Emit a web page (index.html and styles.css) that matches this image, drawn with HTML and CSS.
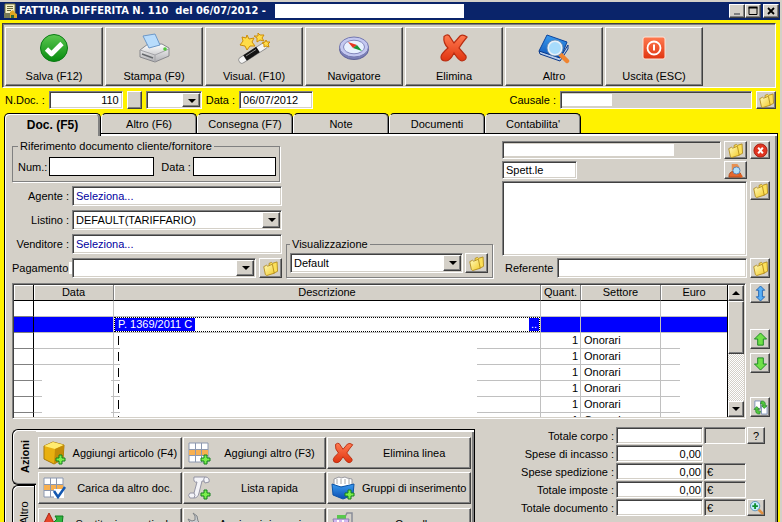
FILE: index.html
```html
<!DOCTYPE html>
<html lang="it">
<head>
<meta charset="utf-8">
<title>Fattura differita</title>
<link rel="stylesheet" href="styles.css">
</head>
<body>
<svg class="defs" aria-hidden="true">
  <defs>
    <linearGradient id="gGreen" x1="0" y1="0" x2="0" y2="1"><stop offset="0" stop-color="#5cc850"/><stop offset="1" stop-color="#078a10"/></linearGradient>
    <linearGradient id="gRed" x1="0" y1="0" x2="0" y2="1"><stop offset="0" stop-color="#ff7a50"/><stop offset="1" stop-color="#e03410"/></linearGradient>
    <linearGradient id="gGold" x1="0" y1="0" x2="1" y2="1"><stop offset="0" stop-color="#fffbc0"/><stop offset="1" stop-color="#f4cc28"/></linearGradient>
    <linearGradient id="gBlue" x1="0" y1="0" x2="0" y2="1"><stop offset="0" stop-color="#3a9cf0"/><stop offset="1" stop-color="#0a4cb0"/></linearGradient>
    <linearGradient id="gGrey" x1="0" y1="0" x2="0" y2="1"><stop offset="0" stop-color="#ffffff"/><stop offset="1" stop-color="#b0b0b4"/></linearGradient>
  </defs>
  <symbol id="folder" viewBox="0 0 16 16">
    <path d="M6.500 4V2.500L9 1.500l1 1 5-1.500.5 10-4 2z" fill="#fce058" stroke="#b08818" stroke-width=".9"/>
    <path d="M.8 6l3-1.500 1.200 1 5-2L12 13l-8 2.500-1.500-1z" fill="url(#gGold)" stroke="#b08818" stroke-width=".9"/>
  </symbol>
  <symbol id="cross" viewBox="0 0 32 32">
    <path d="M6 4.500q3-2.500 5-1L16 11l6-7q3-2 7 1-5 6-8 11l7 8q1 4-4 5-3 0-8-8-4 8-8 8-5 0-5-4 0-3 7-9Q5 11 6 4.500z" fill="url(#gRed)" stroke="#b82c10" stroke-width="1.200"/>
  </symbol>
  <symbol id="plus" viewBox="0 0 11 11">
    <path d="M4 1h3v3h3v3H7v3H4V7H1V4h3z" fill="#7cf04c" stroke="#14801c"/>
  </symbol>
  <symbol id="grid" viewBox="0 0 22 22">
    <path d="M1 1h19v19H1z" fill="#fff" stroke="#8c98b0"/>
    <path d="M1 7h19v7H1z" fill="#f8b050"/>
    <path d="M1 7.500h19M1 13.500h19M7.500 1v19M13.500 1v19" stroke="#8c98b0" fill="none"/>
  </symbol>
  <symbol id="arrow" viewBox="0 0 16 16">
    <path d="M8 1l6.500 6.500H11V14H5V7.500H1.500z" fill="#70e048" stroke="#188420"/>
  </symbol>
</svg>

<main class="window">
  <header class="titlebar">
    <svg class="appicon" viewBox="0 0 16 16"><path d="M2 1h10v12H2z" fill="#f4f0c8" stroke="#7c7838"/><path d="M4 3.500h6M4 5.500h6M4 7.500h4" stroke="#68683c"/><path d="M1 10h6v5H1z" fill="#787c58"/><path d="M7 9l3-2 2 3 2 1v4H7z" fill="#e0a820"/><path d="M8 12h3v3H8z" fill="#306c30"/></svg>
    <h1>FATTURA DIFFERITA N. 110&nbsp; del 06/07/2012 -</h1>
    <span class="title-blank"></span>
    <div class="winbuttons">
      <button class="raised" aria-label="Riduci"><svg viewBox="0 0 12 10"><path d="M3 8h6" stroke="#808080" stroke-width="2"/></svg></button>
      <button class="raised" aria-label="Ingrandisci"><svg viewBox="0 0 12 10"><path d="M2 1.500h8v7H2z" fill="none" stroke="#000"/><path d="M1.500 1.500h9" stroke="#000" stroke-width="2"/></svg></button>
      <button class="raised close" aria-label="Chiudi"><svg viewBox="0 0 12 10"><path d="M3 2l6 6M9 2L3 8" stroke="#000" stroke-width="1.800"/></svg></button>
    </div>
  </header>

  <nav class="toolbar">
    <button class="raised tool"><svg viewBox="0 0 32 32"><circle cx="16" cy="16" r="13.500" fill="url(#gGreen)" stroke="#0a7a14"/><path d="M8.500 17l5 5L24 11.500" fill="none" stroke="#fff" stroke-width="4.600" stroke-linejoin="round"/></svg>Salva (F12)</button>
    <button class="raised tool"><svg viewBox="0 0 32 32"><path d="M2 18l8-6 14 0 7 4v8l-14 6L2 25z" fill="url(#gGrey)" stroke="#88888c"/><path d="M5 4l12-2 5 11-11 3z" fill="#b8dcfc" stroke="#6c98c8"/><path d="M2 18l15 5 14-6M17 23v7" fill="none" stroke="#a4a4a8"/><path d="M4 22l11 4" stroke="#65686c" stroke-width="1.500"/><circle cx="27" cy="17" r="1.800" fill="#50c83c"/></svg>Stampa (F9)</button>
    <button class="raised tool"><svg viewBox="0 0 32 32"><path d="M4 28L26 14" stroke="#888" stroke-width="7" stroke-linecap="round"/><path d="M4 28L26 14" stroke="#f4f4f4" stroke-width="5.600" stroke-linecap="round"/><path d="M7 26L20 17.500" stroke="#141414" stroke-width="6.500"/><path d="M8 24l10-6.500" stroke="#888" stroke-width="1"/><path d="M9 3l2 4 5-1-2 4 3 4-5 0-3 4-2-4-5-1 3-4-1-4 4 1zM20 1l2 2 4 0-2 3 2 3-4-1-3 2 0-4-3-2 4 0zM28 8l1 2 3 0-2 2 1 3-3-1-2 1 0-3-2-1 3-1z" fill="#ffdc48" stroke="#cc8c08"/></svg>Visual. (F10)</button>
    <button class="raised tool"><svg viewBox="0 0 32 32"><ellipse cx="16" cy="17" rx="14.500" ry="10.500" fill="#7c80b8" stroke="#5c6098"/><ellipse cx="16" cy="15" rx="14.500" ry="10" fill="#c4c8f0" stroke="#7478b0"/><ellipse cx="16" cy="15" rx="10.500" ry="6.800" fill="#e8f0ff" stroke="#8488bc"/><path d="M10 10l9 3-4 3z" fill="#e83820"/><path d="M15 16l4-3 5 6z" fill="#189438"/></svg>Navigatore</button>
    <button class="raised tool"><svg><use href="#cross"/></svg>Elimina</button>
    <button class="raised tool"><svg viewBox="0 0 32 32"><path d="M9 3l20 7-7 18L1 19z" fill="url(#gBlue)" stroke="#0c449c"/><path d="M1 19l21 7 8-13v4l-8 12L2 22z" fill="#b8cce8" stroke="#08388c"/><path d="M22 22l7 7" stroke="#f08430" stroke-width="4.500" stroke-linecap="round"/><circle cx="17" cy="16" r="7" fill="#a8dcfc" stroke="#e8f0f8" stroke-width="2"/><circle cx="17" cy="16" r="8" fill="none" stroke="#6088b0" stroke-width=".8"/></svg>Altro</button>
    <button class="raised tool"><svg viewBox="0 0 32 32"><rect x="5" y="5" width="22" height="22" rx="2" fill="url(#gRed)" stroke="#fce4d8"/><circle cx="16" cy="16" r="6.500" fill="none" stroke="#fff" stroke-width="1.800"/><path d="M16 12.500v6" stroke="#fff" stroke-width="2"/></svg>Uscita (ESC)</button>
  </nav>

  <div class="docbar">
    <label for="ndoc">N.Doc. :</label>
    <input id="ndoc" class="sunken num w74" value="110">
    <button class="raised mini" aria-label="Numerazione"></button>
    <span class="combo w56"><select aria-label="Serie"><option></option></select></span>
    <label for="data">Data :</label>
    <input id="data" class="sunken w74" value="06/07/2012">
    <label for="causale" class="push">Causale :</label>
    <span class="sunken readonly causale"><input id="causale"></span>
    <button class="raised pick" aria-label="Scegli causale"><svg><use href="#folder"/></svg></button>
  </div>

  <nav class="tabs">
    <button class="tab active">Doc. (F5)</button>
    <button class="tab">Altro (F6)</button>
    <button class="tab">Consegna (F7)</button>
    <button class="tab">Note</button>
    <button class="tab">Documenti</button>
    <button class="tab">Contabilita'</button>
  </nav>

  <section class="page">
    <div class="form">
      <div class="form-left">
        <fieldset class="group ref">
          <legend>Riferimento documento cliente/fornitore</legend>
          <label for="rnum">Num.:</label><input id="rnum" class="flat rnum">
          <label for="rdata">Data :</label><input id="rdata" class="flat rdata">
        </fieldset>
        <div class="row"><label for="agente">Agente :</label><input id="agente" class="sunken grow link" value="Seleziona..."></div>
        <div class="row"><label for="listino">Listino :</label><span class="combo grow"><select id="listino"><option>DEFAULT(TARIFFARIO)</option></select></span></div>
        <div class="row"><label for="vend">Venditore :</label><input id="vend" class="sunken grow link" value="Seleziona..."></div>
        <div class="row"><label for="pag">Pagamento&nbsp;</label><span class="combo grow payment"><select id="pag"><option></option></select></span><button class="raised pick wide" aria-label="Scegli pagamento"><svg><use href="#folder"/></svg></button></div>
      </div>

      <fieldset class="group vis">
        <legend>Visualizzazione</legend>
        <span class="combo grow"><select aria-label="Visualizzazione"><option>Default</option></select></span>
        <button class="raised pick wide" aria-label="Scegli visualizzazione"><svg><use href="#folder"/></svg></button>
      </fieldset>

      <div class="form-right">
        <div class="row low"><span class="sunken readonly grow client"><input aria-label="Cliente"></span><button class="raised pick wide" aria-label="Scegli cliente"><svg><use href="#folder"/></svg></button><button class="raised pick" aria-label="Rimuovi cliente"><svg viewBox="0 0 16 16"><circle cx="8" cy="8" r="7" fill="#e03420" stroke="#a81c10"/><path d="M5.500 5l5 6M10.500 5l-5 6" stroke="#fff" stroke-width="2.200"/></svg></button></div>
        <div class="row low"><input class="sunken w75" aria-label="Titolo" value="Spett.le"><button class="raised pick wide find" aria-label="Cerca cliente"><svg viewBox="0 0 16 16"><path d="M4 1h6l2 3v4H4z" fill="#e89050"/><path d="M1 15q0-6 5-6h4q4 0 4 6z" fill="#e46830" stroke="#b04818"/><path d="M11 11l4 4" stroke="#e06020" stroke-width="2.500"/><circle cx="9" cy="8" r="3.800" fill="#b0e0fc" stroke="#5c80b0"/></svg></button></div>
        <div class="row address"><textarea class="sunken grow" aria-label="Indirizzo"></textarea><button class="raised pick" aria-label="Scegli indirizzo"><svg><use href="#folder"/></svg></button></div>
        <div class="row"><label for="refe">Referente</label><input id="refe" class="sunken grow"><button class="raised pick" aria-label="Scegli referente"><svg><use href="#folder"/></svg></button></div>
      </div>
    </div>

    <div class="lines">
      <div class="sunken gridbox">
        <div class="gridview">
          <table>
            <colgroup><col class="c-mark"><col class="c-date"><col><col class="c-qty"><col class="c-sector"><col class="c-euro"></colgroup>
            <thead><tr><th></th><th>Data</th><th>Descrizione</th><th>Quant.</th><th>Settore</th><th>Euro</th></tr></thead>
            <tbody>
              <tr><td></td><td></td><td></td><td></td><td></td><td></td></tr>
              <tr class="selected"><td></td><td></td><td class="focus"><div><span>P. 1369/2011 C</span><span class="tail">..</span></div></td><td></td><td></td><td></td></tr>
              <tr><td></td><td></td><td><i></i></td><td>1</td><td>Onorari</td><td></td></tr>
              <tr><td></td><td></td><td><i></i></td><td>1</td><td>Onorari</td><td></td></tr>
              <tr><td></td><td></td><td><i></i></td><td>1</td><td>Onorari</td><td></td></tr>
              <tr><td></td><td></td><td><i></i></td><td>1</td><td>Onorari</td><td></td></tr>
              <tr><td></td><td></td><td><i></i></td><td>1</td><td>Onorari</td><td></td></tr>
              <tr><td></td><td></td><td><i></i></td><td>1</td><td>Onorari</td><td></td></tr>
            </tbody>
          </table>
          <span class="blank blank-date"></span><span class="blank blank-desc"></span><span class="blank blank-euro"></span>
        </div>
        <div class="scroll">
          <button class="raised" aria-label="Su"><span class="tri up"></span></button>
          <div class="track"><div class="raised thumb"></div></div>
          <button class="raised" aria-label="Giù"><span class="tri"></span></button>
        </div>
      </div>
      <div class="side">
        <button class="raised pick" aria-label="Altezza"><svg viewBox="0 0 16 16"><path d="M8 0l4.500 4.500H10v7h2.500L8 16l-4.500-4.500H6v-7H3.500z" fill="#58b0f8" stroke="#2464b0"/></svg></button>
        <button class="raised pick second" aria-label="Sposta su"><svg><use href="#arrow"/></svg></button>
        <button class="raised pick" aria-label="Sposta giù"><svg class="flip"><use href="#arrow"/></svg></button>
        <button class="raised pick last" aria-label="Aggiorna"><svg viewBox="0 0 16 16"><path d="M2 1h6v8H2zM9 7h6v8H9z" fill="#fff" stroke="#7c90b8"/><path d="M9 1q5 0 4 5h2l-3 3-3-3h2q0-2-3-2zM7 15q-5 0-4-5H1l3-3 3 3H5q0 2 3 2z" fill="#50c83c" stroke="#187c20" stroke-width=".7"/></svg></button>
      </div>
    </div>

    <div class="bottom">
      <div class="actions">
        <div class="vtabs"><button class="vtab on">Azioni</button><button class="vtab">Altro</button></div>
        <div class="actionpage">
          <button class="raised act"><svg viewBox="0 0 24 24"><path d="M2 5l9-4 11 3-1 14-9 5-10-5z" fill="#e8b010" stroke="#a87808"/><path d="M2 5l9-4 11 3-9 4z" fill="#ffec70"/><path d="M13 8l9-4-1 14-9 5z" fill="#c48c08"/><use href="#plus" x="13" y="13" width="11" height="11"/></svg><span>Aggiungi articolo (F4)</span></button>
          <button class="raised act"><svg viewBox="0 0 24 24"><use href="#grid" x="1" y="1" width="22" height="22"/><use href="#plus" x="13" y="13" width="11" height="11"/></svg><span>Aggiungi altro (F3)</span></button>
          <button class="raised act"><svg><use href="#cross"/></svg><span>Elimina linea</span></button>
          <button class="raised act"><svg viewBox="0 0 24 24"><use href="#grid" x="1" y="1" width="22" height="22"/><path d="M12 13h10v9H12z" fill="#fff"/><path d="M12 15l4 6 7-10" fill="none" stroke="#1458b0" stroke-width="2.500"/></svg><span>Carica da altro doc.</span></button>
          <button class="raised act"><svg viewBox="0 0 24 24"><path d="M7 1h12q4 1 3 5l-4 1-1-2h-2l-3 12q-1 5-5 5H3q-3-3 0-5h4l3-11q-4 1-3-5z" fill="#f4f4f8" stroke="#9494a4"/><path d="M7 17q2 2 0 5M18 1q-2 2-1 4" fill="none" stroke="#9494a4"/><use href="#plus" x="13" y="13" width="11" height="11"/></svg><span>Lista rapida</span></button>
          <button class="raised act"><svg viewBox="0 0 24 24"><path d="M3 3l5-2 2 1 4-1 2 1 5 1v8H3z" fill="#fff" stroke="#9a9aa0"/><path d="M6 3v5M10 3v5M14 3v5M18 3v5" stroke="#a8a8a8"/><path d="M1 8l9 3 13-3-1 11-10 4-10-4z" fill="url(#gBlue)" stroke="#0c54a8"/><use href="#plus" x="13" y="13" width="11" height="11"/></svg><span>Gruppi di inserimento</span></button>
          <button class="raised act"><svg viewBox="0 0 24 24"><path d="M7 1l6 12H1z" fill="#e84428" stroke="#a82410"/><path d="M13 4l8 0-1 9-3-3-4 4-2-3 4-4z" fill="#30b440" stroke="#0c7c1c"/><path d="M2 14h8v8H2z" fill="#f0a020"/><circle cx="17" cy="18" r="5" fill="#3484d8"/></svg><span>Sostituzione articolo</span></button>
          <button class="raised act"><svg viewBox="0 0 24 24"><path d="M6 1l4 3 1 5 10 10q1 3-2 4L9 12l-5 0-3-5 4 2 3-1 0-4z" fill="#c8ccd0" stroke="#808488"/></svg><span>Aggiungi riparazione</span></button>
          <button class="raised act"><svg viewBox="0 0 24 24"><path d="M14 5l2-4h5v12l-3 3" fill="none" stroke="#888c98" stroke-width="1.500"/><path d="M6 3h9v6H6z" fill="#58c84c"/><path d="M2 7h16l-2 10H4z" fill="#d0b8f0" stroke="#8c80b0"/><path d="M7 8v8M12 8v8" stroke="#fff" stroke-width="2"/><circle cx="6" cy="20" r="2" fill="#555"/><circle cx="15" cy="20" r="2" fill="#555"/></svg><span>Carrello</span></button>
        </div>
      </div>

      <div class="totals">
        <label for="t1">Totale corpo :</label><input id="t1" class="sunken num"><output class="sunken"></output><button class="raised" aria-label="Aiuto">?</button>
        <label for="t2">Spese di incasso :</label><input id="t2" class="sunken num" value="0,00"><span></span><span></span>
        <label for="t3">Spese spedizione :</label><input id="t3" class="sunken num" value="0,00"><output class="sunken">€</output><span></span>
        <label for="t4">Totale imposte :</label><input id="t4" class="sunken num" value="0,00"><output class="sunken">€</output><span></span>
        <label for="t5">Totale documento :</label><input id="t5" class="sunken num"><output class="sunken">€</output><button class="raised" aria-label="Dettaglio"><svg viewBox="0 0 16 16"><path d="M10 10l4 4" stroke="#e09040" stroke-width="3" stroke-linecap="round"/><circle cx="6.500" cy="6.500" r="5" fill="#c4ecfc" stroke="#5c90b8"/><path d="M6.500 3.500v6M3.500 6.500h6" stroke="#109030" stroke-width="2"/></svg></button>
      </div>
    </div>
  </section>
</main>
</body>
</html>
```
FILE: styles.css
```css
:root {
  --face: #d4d0c8;
  --shade: #808080;
  --dark: #404040;
  --yellow: #fff200;
}

* { box-sizing: border-box; }

body {
  margin: 0;
  height: 100vh;
  overflow: hidden;
  background: var(--face);
  color: #000;
  font: 11px/14px "Liberation Sans", Arial, sans-serif;
}

button, input, select, textarea {
  margin: 0;
  padding: 0;
  border: 0;
  border-radius: 0;
  font: inherit;
  color: inherit;
  min-width: 0;
  outline: 0;
}

button { background: var(--face); }
label { white-space: nowrap; }
.defs { position: absolute; width: 0; height: 0; }

.raised {
  background: var(--face);
  border: 1px solid;
  border-color: #fff var(--dark) var(--dark) #fff;
  box-shadow: inset -1px -1px var(--shade);
}

.sunken {
  background: #fff;
  border: 1px solid;
  border-color: var(--shade) #fff #fff var(--shade);
  box-shadow: inset 1px 1px var(--dark), inset -1px -1px var(--face);
  padding: 0 3px;
}

.num { text-align: right; }
.grow { flex: 1; }
.w74 { width: 74px; }
.w75 { width: 75px; }
.w56 { width: 56px; }

.window {
  height: 100vh;
  display: flex;
  flex-direction: column;
  background: var(--yellow);
  border-top: 2px solid var(--face);
  border-right: 2px solid var(--face);
}

/* Title bar */
.titlebar {
  flex: none;
  display: flex;
  align-items: center;
  height: 18px;
  padding: 0 1px 0 3px;
  background: #0a246a;
  color: #fff;
}
.appicon { width: 16px; height: 16px; }
.titlebar h1 {
  margin: 0;
  min-width: 253px;
  font: bold 11px/18px "DejaVu Sans Condensed", Tahoma, sans-serif;
  white-space: nowrap;
}
.title-blank { width: 189px; height: 14px; margin-left: 3px; background: #fff; }
.winbuttons { display: flex; margin-left: auto; }
.winbuttons button { width: 16px; height: 14px; display: grid; place-items: center; }
.winbuttons svg { width: 12px; height: 10px; }
.winbuttons .close { margin-left: 2px; }

/* Toolbar */
.toolbar {
  flex: none;
  display: flex;
  gap: 2px;
  margin: 3px 4px 0 2px;
  padding: 3px 2px 0;
  height: 65px;
  background: var(--face);
  border: 1px solid;
  border-color: var(--dark) #fff #fff var(--dark);
  box-shadow: inset 1px 1px var(--shade);
}
.tool {
  width: 98px;
  height: 59px;
  display: flex;
  flex-direction: column;
  align-items: center;
  padding-top: 4px;
}
.tool svg { width: 32px; height: 32px; margin-bottom: 5px; }

/* Document row */
.docbar {
  flex: none;
  display: flex;
  align-items: center;
  height: 18px;
  margin: 3px 4px 0 5px;
  gap: 4px;
}
.docbar .sunken, .docbar .combo, .docbar button { height: 18px; }
.docbar .mini { width: 15px; }
.docbar .push { margin-left: auto; }
.causale { width: 192px; }
.readonly { background: var(--face); padding: 2px 1px; display: flex; }
.readonly input { background: #fff; height: 100%; }
.causale input { width: 50px; }

.combo { position: relative; display: block; height: 20px; }
.combo select {
  appearance: none;
  width: 100%;
  height: 100%;
  background: #fff;
  border: 1px solid;
  border-color: var(--shade) #fff #fff var(--shade);
  box-shadow: inset 1px 1px var(--dark), inset -1px -1px var(--face);
  padding: 0 20px 0 3px;
}
.combo::before {
  content: "";
  position: absolute;
  top: 2px;
  right: 2px;
  bottom: 2px;
  width: 16px;
  background: var(--face);
  border: 1px solid;
  border-color: #fff var(--dark) var(--dark) #fff;
  box-shadow: inset -1px -1px var(--shade);
  pointer-events: none;
}
.combo::after, .tri {
  border: 4px solid transparent;
  border-top-color: #000;
  border-bottom: 0;
}
.combo::after {
  content: "";
  position: absolute;
  top: 8px;
  right: 6px;
  pointer-events: none;
}
.payment { background: linear-gradient(#fff, #fff) 0 4px / 6px 12px no-repeat; margin-left: -3px; padding-left: 3px; }
.tri.up { transform: rotate(180deg); }

.pick {
  width: 20px;
  flex: none;
  display: grid;
  place-items: center;
}
.pick.wide { width: 23px; }
.pick svg { width: 15px; height: 15px; }

/* Tabs */
.tabs { flex: none; display: flex; margin: 4px 0 0 4px; height: 20px; }
.tab {
  width: 96px;
  height: 20px;
  border: 1px solid #000;
  border-bottom: 0;
  border-left-color: #fff;
  border-radius: 5px 5px 0 0;
  box-shadow: inset -1px 0 var(--shade);
}
.tab.active {
  position: relative;
  z-index: 1;
  width: 97px;
  height: 23px;
  border-left-color: #000;
  box-shadow: inset 1px 1px #fff, inset -2px 0 var(--shade);
  font: bold 12px/20px "Liberation Sans", Arial, sans-serif;
}

.page {
  flex: 1;
  min-height: 0;
  overflow: hidden;
  display: flex;
  flex-direction: column;
  margin: 0 2px 0 4px;
  padding: 7px 7px 0;
  background: var(--face);
  border: 1px solid #000;
  border-bottom: 0;
  box-shadow: inset 1px 2px #fff, inset -2px 0 var(--shade);
}

/* Form */
.form { flex: none; display: flex; }
.form-left { width: 270px; display: flex; flex-direction: column; gap: 4px; }
.row { display: flex; height: 20px; align-items: stretch; gap: 3px; }
.row label { line-height: 20px; }
.form-left .row label { width: 57px; text-align: right; }
.link { color: #0000a0; }

.group {
  margin: 0;
  min-width: 0;
  border: 1px solid var(--shade);
  box-shadow: 1px 1px #fff;
  display: flex;
  align-items: center;
}
.group legend { padding: 0 2px; line-height: 11px; }
.ref { width: 268px; padding: 5px 3px 5px 5px; }
.flat { height: 19px; background: #fff; border: 1px solid #000; padding: 0 2px; }
.rnum { width: 105px; margin: 0 7px 0 2px; }
.rdata { flex: 1; margin-left: 2px; }
.vis { width: 207px; margin-left: 4px; padding: 3px 4px 4px 3px; align-self: flex-end; gap: 2px; }
.vis button { height: 20px; }

.form-right { flex: 1; margin-left: 9px; display: flex; flex-direction: column; gap: 2px; }
.row.low { height: 18px; }
.client input { width: 170px; }
.find { margin-left: auto; margin-right: 23px; }
.address { flex: 1; }
.address textarea { resize: none; }
.address button { height: 19px; }
.form-right label { padding: 0 1px 0 3px; }

/* Invoice lines */
.lines { flex: none; display: flex; gap: 4px; height: 136px; margin-top: 5px; }
.gridbox { flex: 1; display: flex; padding: 1px; overflow: hidden; }
.gridview { position: relative; flex: 1; overflow: hidden; }
table { width: 100%; table-layout: fixed; border-collapse: separate; border-spacing: 0; }
.c-mark { width: 20px; }
.c-date, .c-sector { width: 80px; }
.c-qty { width: 40px; }
.c-euro { width: 66px; }
th, td { height: 16px; padding: 0 3px; line-height: 15px; border-right: 1px solid #c0c0c0; border-bottom: 1px solid #c0c0c0; }
th {
  font-weight: normal;
  padding: 0;
  background: var(--face);
  border-right-color: var(--shade);
  border-bottom-color: #000;
  box-shadow: inset 1px 1px #fff;
}
th:first-child, td:first-child { border-right-color: #000; }
td:first-child { border-bottom-color: var(--shade); }
th:last-child, td:last-child { border-right: 0; }
td:nth-child(4) { text-align: right; padding-right: 2px; }
td i { display: block; width: 1px; height: 9px; margin-left: 1px; background: #000; }
.selected td { background: #00f; }
.selected .focus { padding: 0; }
.focus div {
  display: flex;
  justify-content: space-between;
  height: 15px;
  line-height: 13px;
  border: 1px dotted #000;
  background: #fff;
  color: #fff;
}
.focus span { background: #00f; padding: 0 3px; }
.focus .tail { padding: 0 2px; }
.blank { position: absolute; background: #fff; }
.blank-date { left: 28px; top: 89px; bottom: 0; width: 69px; }
.blank-desc { left: 106px; right: 250px; top: 50px; bottom: 0; }
.blank-euro { right: 0; width: 47px; top: 50px; bottom: 0; }

.scroll { width: 17px; border-left: 1px solid #000; display: flex; flex-direction: column; }
.scroll button { height: 16px; display: grid; place-items: center; }
.track { flex: 1; background: repeating-conic-gradient(#fff 0 25%, var(--face) 0 50%) 0 0 / 2px 2px; }
.thumb { height: 53px; }

.side { width: 20px; display: flex; flex-direction: column; gap: 4px; }
.side .pick { height: 20px; }
.side .second { margin-top: 22px; }
.side .last { margin-top: auto; margin-bottom: 2px; }
.flip { transform: rotate(180deg); }

/* Bottom area */
.bottom { flex: none; display: flex; margin-top: 8px; }
.actions { display: flex; width: 463px; margin-top: 2px; }
.vtabs { width: 22px; display: flex; flex-direction: column; }
.vtab {
  writing-mode: vertical-rl;
  transform: rotate(180deg);
  width: 22px;
  height: 56px;
  border: 1px solid #000;
  border-left: 0;
  border-radius: 0 6px 6px 0;
  box-shadow: inset -1px -1px #fff;
}
.vtab.on { position: relative; z-index: 1; width: 24px; font-weight: bold; box-shadow: inset -1px -1px #fff, inset 0 1px var(--shade); }
.actionpage {
  flex: 1;
  display: grid;
  grid-template-columns: repeat(3, 1fr);
  gap: 2px 1px;
  padding: 7px 3px 0;
  border: 1px solid #000;
  border-bottom: 0;
  box-shadow: inset 1px 2px #fff, inset -2px 0 var(--shade);
}
.act { height: 32px; display: flex; align-items: center; gap: 6px; padding: 0 3px; }
.act svg { width: 24px; height: 24px; flex: none; }
.act span { flex: 1; text-align: center; white-space: nowrap; }

.totals {
  flex: 1;
  display: grid;
  grid-template-columns: 1fr 87px 42px 18px;
  grid-auto-rows: 17px;
  gap: 1px;
  margin-right: 5px;
}
.totals label { text-align: right; line-height: 18px; padding-right: 1px; }
.totals .num { padding: 0 1px; }
.totals output { background: var(--face); padding: 0 2px; line-height: 16px; }
.totals button { display: grid; place-items: center; }
.totals svg { width: 15px; height: 15px; }
```
